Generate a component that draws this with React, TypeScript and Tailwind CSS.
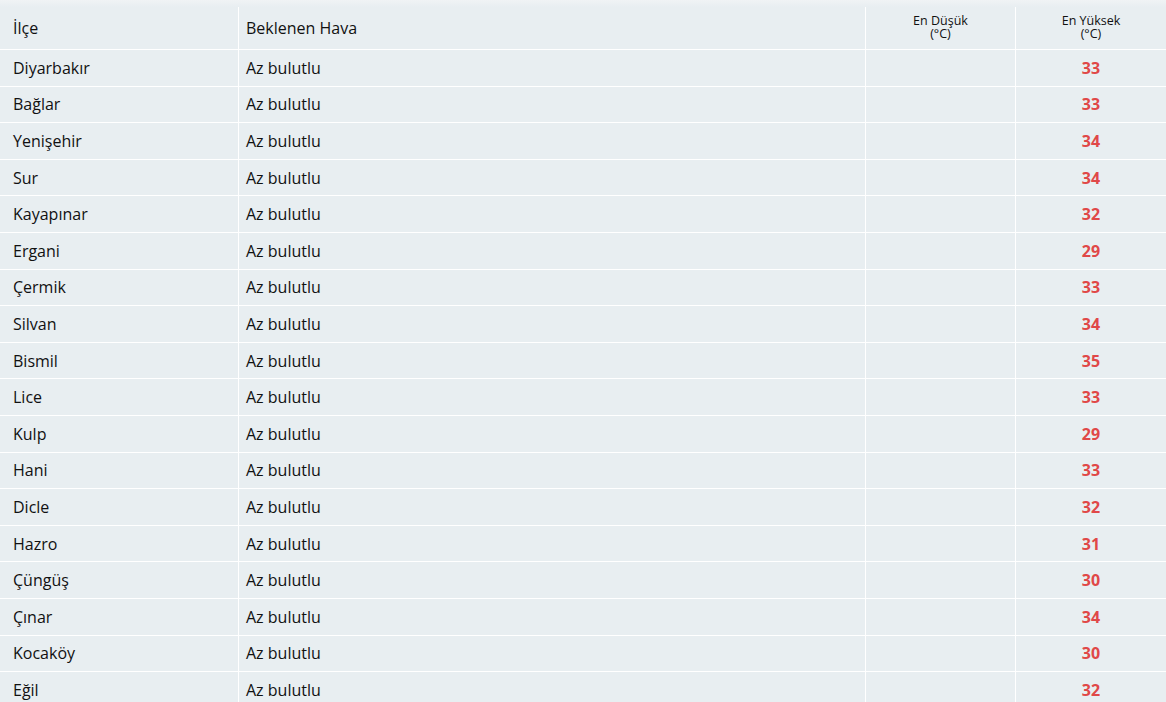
import React from "react";

const rows: [string, number][] = [
  ["Diyarbakır", 33],
  ["Bağlar", 33],
  ["Yenişehir", 34],
  ["Sur", 34],
  ["Kayapınar", 32],
  ["Ergani", 29],
  ["Çermik", 33],
  ["Silvan", 34],
  ["Bismil", 35],
  ["Lice", 33],
  ["Kulp", 29],
  ["Hani", 33],
  ["Dicle", 32],
  ["Hazro", 31],
  ["Çüngüş", 30],
  ["Çınar", 34],
  ["Kocaköy", 30],
  ["Eğil", 32],
];

export default function App() {
  return (
    <div
      className="w-[1166px] h-[702px] overflow-hidden bg-[#e8eef1] text-[#111]"
      style={{ fontFamily: '"Open Sans", "Noto Sans", sans-serif' }}
    >
      <div className="h-[7px] bg-gradient-to-b from-[#f0f3f5] to-[#e8eef1]" />
      <div className="grid grid-cols-[238px_627px_150px_1fr] h-[43px] border-b border-white">
        <div className="flex items-center pl-[13px] text-base">İlçe</div>
        <div className="flex items-center pl-[7px] border-l border-white text-base">Beklenen Hava</div>
        <div className="flex flex-col items-center justify-start pt-[7px] border-l border-white text-[12.5px] leading-[13px]">
          <span>En Düşük</span>
          <span>(°C)</span>
        </div>
        <div className="flex flex-col items-center justify-start pt-[7px] border-l border-white text-[12.5px] leading-[13px]">
          <span>En Yüksek</span>
          <span>(°C)</span>
        </div>
      </div>
      {rows.map(([name, max]) => (
        <div
          key={name}
          className="grid grid-cols-[238px_627px_150px_1fr] h-[36.6px] border-b border-white"
        >
          <div className="flex items-center pl-[13px] text-base">{name}</div>
          <div className="flex items-center pl-[7px] border-l border-white text-base">Az bulutlu</div>
          <div className="border-l border-white" />
          <div className="flex items-center justify-center border-l border-white text-base font-bold text-[#e04848]">
            {max}
          </div>
        </div>
      ))}
    </div>
  );
}
